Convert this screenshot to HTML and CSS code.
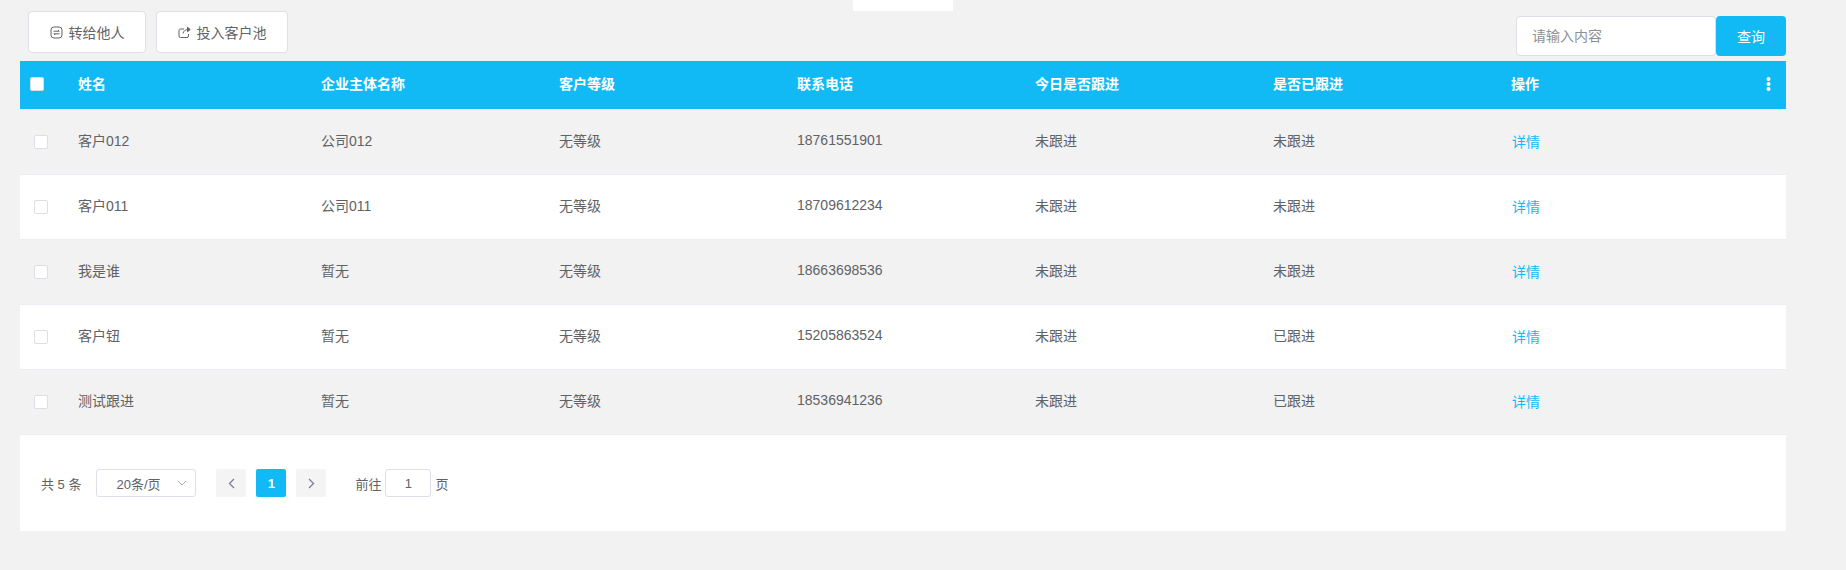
FILE: index.html
```html
<!DOCTYPE html>
<html lang="zh-CN">

<head>
    <meta charset="UTF-8">
    <meta name="viewport" content="width=device-width, initial-scale=1.0">
    <title>客户列表</title>
    <link rel="stylesheet" href="styles.css">
</head>

<body>
    <div class="top-tab"></div>

    <div class="page">
        <div class="toolbar">
            <div class="toolbar-actions">
                <button type="button" class="action-button action-transfer">
                    <svg class="action-icon" width="13" height="13" viewBox="0 0 13 13" fill="none" stroke="#606266" stroke-width="1">
                        <rect x="1" y="1" width="11" height="11" rx="3"></rect>
                        <path d="M3.500 5.200H9.200L8 4M9.500 7.800H3.800L5 9"></path>
                    </svg>
                    转给他人
                </button>
                <button type="button" class="action-button action-pool">
                    <svg class="action-icon" width="13" height="13" viewBox="0 0 13 13" fill="none" stroke="#606266" stroke-width="1">
                        <path d="M6 3H2.500A1.500 1.500 0 0 0 1 4.500V10a1.500 1.500 0 0 0 1.500 1.500H9A1.500 1.500 0 0 0 10.500 10V8"></path>
                        <path d="M5 7.500C5.500 5 7.500 3.500 10 3.500"></path>
                        <path d="M9.500 1.200L12.200 3.500L9.500 5.800Z" fill="#606266"></path>
                    </svg>
                    投入客户池
                </button>
            </div>
            <form class="search-form">
                <input type="text" class="search-input" placeholder="请输入内容">
                <button type="button" class="search-button">查询</button>
            </form>
        </div>

        <div class="customer-table">
            <div class="table-row table-head">
                <div class="cell cell-check"><span class="checkbox head-checkbox"></span></div>
                <div class="cell">姓名</div>
                <div class="cell">企业主体名称</div>
                <div class="cell">客户等级</div>
                <div class="cell">联系电话</div>
                <div class="cell">今日是否跟进</div>
                <div class="cell">是否已跟进</div>
                <div class="cell cell-ops">
                    操作
                    <svg class="more-icon" width="5" height="14" viewBox="0 0 5 14" fill="#fff">
                        <circle cx="2.500" cy="2" r="2"></circle>
                        <circle cx="2.500" cy="7" r="2"></circle>
                        <circle cx="2.500" cy="12" r="2"></circle>
                    </svg>
                </div>
            </div>

            <div class="table-row body-row striped">
                <div class="cell cell-check"><span class="checkbox"></span></div>
                <div class="cell">客户012</div>
                <div class="cell">公司012</div>
                <div class="cell">无等级</div>
                <div class="cell">18761551901</div>
                <div class="cell">未跟进</div>
                <div class="cell">未跟进</div>
                <div class="cell cell-link"><a class="detail-link">详情</a></div>
            </div>
            <div class="table-row body-row">
                <div class="cell cell-check"><span class="checkbox"></span></div>
                <div class="cell">客户011</div>
                <div class="cell">公司011</div>
                <div class="cell">无等级</div>
                <div class="cell">18709612234</div>
                <div class="cell">未跟进</div>
                <div class="cell">未跟进</div>
                <div class="cell cell-link"><a class="detail-link">详情</a></div>
            </div>
            <div class="table-row body-row striped">
                <div class="cell cell-check"><span class="checkbox"></span></div>
                <div class="cell">我是谁</div>
                <div class="cell">暂无</div>
                <div class="cell">无等级</div>
                <div class="cell">18663698536</div>
                <div class="cell">未跟进</div>
                <div class="cell">未跟进</div>
                <div class="cell cell-link"><a class="detail-link">详情</a></div>
            </div>
            <div class="table-row body-row">
                <div class="cell cell-check"><span class="checkbox"></span></div>
                <div class="cell">客户钮</div>
                <div class="cell">暂无</div>
                <div class="cell">无等级</div>
                <div class="cell">15205863524</div>
                <div class="cell">未跟进</div>
                <div class="cell">已跟进</div>
                <div class="cell cell-link"><a class="detail-link">详情</a></div>
            </div>
            <div class="table-row body-row striped">
                <div class="cell cell-check"><span class="checkbox"></span></div>
                <div class="cell">测试跟进</div>
                <div class="cell">暂无</div>
                <div class="cell">无等级</div>
                <div class="cell">18536941236</div>
                <div class="cell">未跟进</div>
                <div class="cell">已跟进</div>
                <div class="cell cell-link"><a class="detail-link">详情</a></div>
            </div>
        </div>

        <div class="pagination">
            <span class="total">共 5 条</span>
            <div class="page-size">
                20条/页
                <svg class="page-size-arrow" width="10" height="6" viewBox="0 0 10 6" fill="none" stroke="#a8abb2" stroke-width="1">
                    <path d="M1 1L5 5L9 1"></path>
                </svg>
            </div>
            <div class="pager">
                <span class="pager-button">
                    <svg width="7" height="11" viewBox="0 0 7 11" fill="none" stroke="#7d8088" stroke-width="1.300">
                        <path d="M6 1L1.500 5.500L6 10"></path>
                    </svg>
                </span>
                <span class="pager-button pager-active">1</span>
                <span class="pager-button">
                    <svg width="7" height="11" viewBox="0 0 7 11" fill="none" stroke="#7d8088" stroke-width="1.300">
                        <path d="M1 1L5.500 5.500L1 10"></path>
                    </svg>
                </span>
            </div>
            <div class="jump">
                前往
                <span class="jump-input">1</span>
                页
            </div>
        </div>
    </div>
</body>

</html>
```

FILE: styles.css
```css
body {
    font-family: "Liberation Sans", "Noto Sans CJK SC", sans-serif;
    font-size: 14px;
    color: #606266;
    background-color: #f2f2f3;
    margin: 0;
    height: 570px;
    overflow: hidden;
    position: relative;
}

.top-tab {
    position: absolute;
    left: 853px;
    top: 0;
    width: 100px;
    height: 11px;
    background-color: #fff;
}

.page {
    width: 1766px;
    margin-left: 20px;
}

.toolbar {
    display: flex;
    justify-content: space-between;
    height: 61px;
}

.toolbar-actions {
    display: flex;
    gap: 10px;
    padding: 11px 0 0 8px;
}

.action-button {
    display: flex;
    align-items: center;
    justify-content: center;
    gap: 6px;
    height: 42px;
    background-color: #fff;
    border: 1px solid #dcdfe6;
    border-radius: 4px;
    font-family: inherit;
    font-size: 14px;
    color: #606266;
    padding: 0;
}

.action-transfer {
    width: 118px;
}

.action-pool {
    width: 132px;
}

.search-form {
    display: flex;
    padding-top: 16px;
}

.search-input {
    width: 200px;
    height: 40px;
    box-sizing: border-box;
    background-color: #fff;
    border: 1px solid #dcdfe6;
    border-radius: 4px;
    padding: 0 15px;
    font-family: inherit;
    font-size: 14px;
    color: #606266;
}

.search-input::placeholder {
    color: #8d9095;
}

.search-button {
    width: 70px;
    height: 40px;
    background-color: #12baf5;
    border: none;
    border-radius: 4px;
    font-family: inherit;
    font-size: 14px;
    color: #fff;
    padding: 0;
}

.table-row {
    display: grid;
    grid-template-columns: 48px 243px 238px 238px 238px 238px 238px 285px;
    align-items: center;
}

.table-head {
    height: 48px;
    background-color: #12baf5;
    color: #fff;
    font-weight: bold;
}

.table-head .cell {
    padding-bottom: 4px;
}

.table-head .cell-check {
    padding-bottom: 2px;
}

.body-row {
    height: 65px;
    background-color: #fff;
    border-bottom: 1px solid #ebeef5;
    box-sizing: border-box;
}

.body-row.striped {
    background-color: #f2f2f3;
}

.table-row:nth-child(2) {
    height: 66px;
}

.cell {
    padding-left: 10px;
}

.body-row .cell {
    padding-bottom: 4px;
}

.table-row:nth-child(2) .cell {
    padding-bottom: 3px;
}

.body-row .cell-link {
    padding-left: 11px;
    padding-bottom: 2px;
}

.table-row:nth-child(2) .cell-link {
    padding-bottom: 1px;
}

.body-row .cell-check,
.table-row:nth-child(2) .cell-check {
    padding-bottom: 0;
}

.cell-check {
    padding-left: 14px;
}

.cell-ops {
    display: flex;
    justify-content: space-between;
    align-items: center;
    padding-right: 15px;
}

.more-icon {
    margin-top: 2px;
}

.checkbox {
    display: block;
    width: 14px;
    height: 14px;
    box-sizing: border-box;
    background-color: #fff;
    border: 1px solid #dcdfe6;
    border-radius: 2px;
}

.head-checkbox {
    margin-left: -4px;
}

.detail-link {
    color: #12baf5;
}

.pagination {
    display: flex;
    align-items: center;
    height: 96px;
    padding-left: 21px;
    box-sizing: border-box;
    background-color: #fff;
    font-size: 13px;
}

.total {
    margin-right: 15px;
}

.page-size {
    display: flex;
    align-items: center;
    justify-content: space-between;
    width: 100px;
    height: 28px;
    box-sizing: border-box;
    border: 1px solid #dcdfe6;
    border-radius: 3px;
    padding: 0 8px 0 19px;
}

.pager {
    display: flex;
    gap: 10px;
    margin-left: 20px;
}

.pager-button {
    display: flex;
    align-items: center;
    justify-content: center;
    width: 30px;
    height: 28px;
    background-color: #f4f4f5;
    border-radius: 2px;
}

.pager-active {
    background-color: #12baf5;
    color: #fff;
    font-weight: bold;
}

.jump {
    display: flex;
    align-items: center;
    gap: 4px;
    margin-left: 29px;
}

.jump-input {
    width: 46px;
    height: 28px;
    box-sizing: border-box;
    border: 1px solid #dcdfe6;
    border-radius: 3px;
    display: flex;
    align-items: center;
    justify-content: center;
}
```
